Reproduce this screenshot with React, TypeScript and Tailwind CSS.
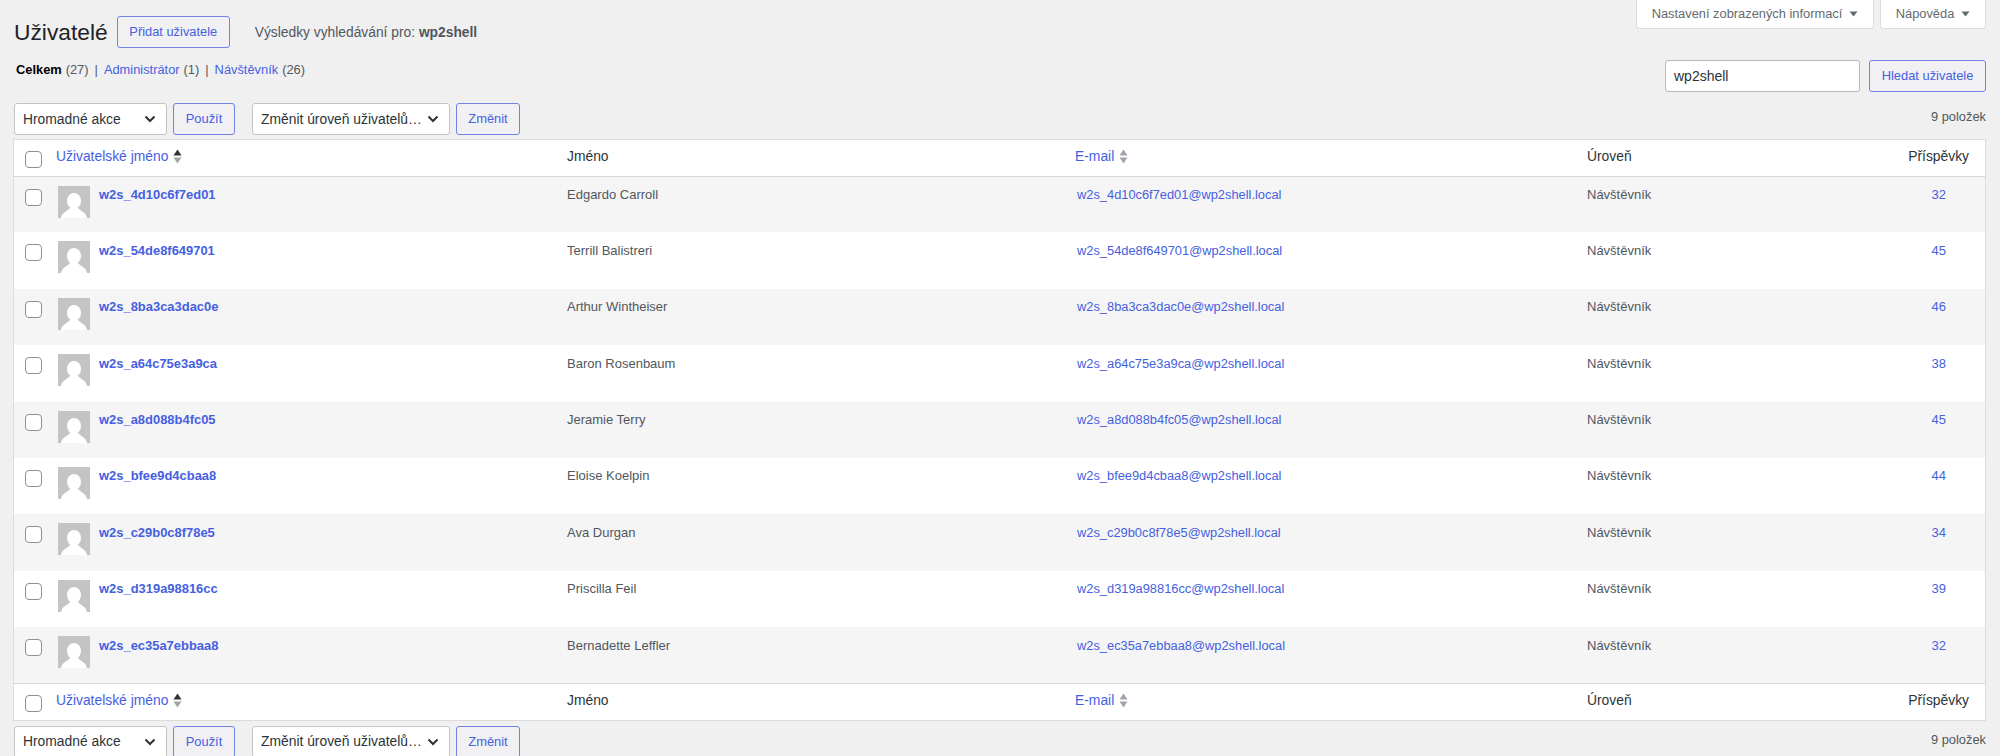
const rows = [
  ["w2s_4d10c6f7ed01", "Edgardo Carroll", "32"],
  ["w2s_54de8f649701", "Terrill Balistreri", "45"],
  ["w2s_8ba3ca3dac0e", "Arthur Wintheiser", "46"],
  ["w2s_a64c75e3a9ca", "Baron Rosenbaum", "38"],
  ["w2s_a8d088b4fc05", "Jeramie Terry", "45"],
  ["w2s_bfee9d4cbaa8", "Eloise Koelpin", "44"],
  ["w2s_c29b0c8f78e5", "Ava Durgan", "34"],
  ["w2s_d319a98816cc", "Priscilla Feil", "39"],
  ["w2s_ec35a7ebbaa8", "Bernadette Leffler", "32"],
];

function Sort({ active }: { active?: boolean }) {
  return (
    <svg width="9" height="15" viewBox="0 0 9 15" className="inline-block ml-[5px] align-[-3px]">
      <path d="M4.5 0.5 L8.5 6.5 L0.5 6.5 Z" fill={active ? "#2f3338" : "#a0a5aa"} />
      <path d="M0.5 8.5 L8.5 8.5 L4.5 14.5 Z" fill="#a0a5aa" />
    </svg>
  );
}

function Chevron() {
  return (
    <svg width="12" height="8" viewBox="0 0 12 8" className="shrink-0">
      <path d="M1.5 1.5 L6 6 L10.5 1.5" fill="none" stroke="#2c3338" strokeWidth="2" />
    </svg>
  );
}

function Select({ text, w }: { text: string; w: string }) {
  return (
    <div className={`${w} h-8 bg-white border border-[#c4c4c6] rounded-[3px] flex items-center justify-between pl-2 pr-[10px] text-[13.85px] text-[#2c3338] whitespace-nowrap`}>
      <span>{text}</span>
      <Chevron />
    </div>
  );
}

function Btn({ text, w }: { text: string; w: string }) {
  return (
    <div className={`${w} h-8 bg-[#f1f1f3] border border-[#7083e0] rounded-[3px] flex items-center justify-center text-[12.9px] text-[#4560e0] whitespace-nowrap`}>
      {text}
    </div>
  );
}

function Actions() {
  return (
    <div className="flex items-center">
      <Select text="Hromadné akce" w="w-[153px]" />
      <div className="w-[6px]" />
      <Btn text="Použít" w="w-[62px]" />
      <div className="w-[17px]" />
      <Select text="Změnit úroveň uživatelů…" w="w-[198px]" />
      <div className="w-[6px]" />
      <Btn text="Změnit" w="w-[64px]" />
    </div>
  );
}

function Checkbox() {
  return <div className="w-[17px] h-[17px] bg-white border border-[#8c8f94] rounded-[4px]" />;
}

function Avatar() {
  return (
    <svg width="32" height="32" viewBox="0 0 32 32" className="shrink-0">
      <rect width="32" height="32" fill="#c4c4c4" />
      <ellipse cx="16" cy="15" rx="7" ry="8" fill="#fff" />
      <path d="M3 32 C4 26 10 25 12 22 L20 22 C22 25 28 26 29 32 Z" fill="#fff" />
    </svg>
  );
}

function HeadRow() {
  return (
    <>
      <th className="p-0 pt-[4px] align-middle font-normal">
        <div className="pl-[11px]"><Checkbox /></div>
      </th>
      <th className="pl-[8px] pb-[3px] font-normal text-left align-middle text-[13.85px] text-[#4560e0]">
        Uživatelské jméno<Sort active />
      </th>
      <th className="pl-[10px] pb-[3px] font-normal text-left align-middle text-[13.85px] text-[#2c3338]">Jméno</th>
      <th className="pl-[8px] pb-[3px] font-normal text-left align-middle text-[13.85px] text-[#4560e0]">
        E-mail<Sort />
      </th>
      <th className="pl-[10px] pb-[3px] font-normal text-left align-middle text-[13.85px] text-[#2c3338]">Úroveň</th>
      <th className="pr-[16px] pb-[3px] font-normal text-right align-middle text-[13.85px] text-[#2c3338]">Příspěvky</th>
    </>
  );
}

export default function App() {
  return (
    <div className="relative w-[2000px] h-[756px] overflow-hidden bg-[#f0f0f1] text-[13px] text-[#50575e] font-['Liberation_Sans',Arial,sans-serif]">
      <div className="absolute right-[14px] top-0 flex gap-[6px]">
        <div className="w-[238px] h-[29px] bg-white border border-[#dcdcde] border-t-0 rounded-b-[4px] flex items-center justify-center gap-[7px] text-[12.85px] text-[#646970]">
          Nastavení zobrazených informací
          <svg width="9" height="6" viewBox="0 0 9 6"><path d="M0.5 0.5 L8.5 0.5 L4.5 5.5 Z" fill="#646970" /></svg>
        </div>
        <div className="w-[106px] h-[29px] bg-white border border-[#dcdcde] border-t-0 rounded-b-[4px] flex items-center justify-center gap-[7px] text-[12.85px] text-[#646970]">
          Nápověda
          <svg width="9" height="6" viewBox="0 0 9 6"><path d="M0.5 0.5 L8.5 0.5 L4.5 5.5 Z" fill="#646970" /></svg>
        </div>
      </div>

      <div className="px-[14px] pt-[16px]">
        <div className="flex items-center h-[32px]">
          <h1 className="text-[22.8px] leading-[32px] text-[#1d2327] font-normal">Uživatelé</h1>
          <div className="ml-[9px] w-[113px] h-8 bg-[#f1f1f3] border border-[#7083e0] rounded-[3px] flex items-center justify-center text-[12.85px] text-[#4560e0]">Přidat uživatele</div>
          <div className="ml-[25px] mt-[3px] text-[13.8px] text-[#50575e]">Výsledky vyhledávání pro: <b className="font-bold">wp2shell</b></div>
        </div>

        <div className="flex items-start justify-between">
          <div className="mt-[14px] pl-[2px] text-[12.85px] leading-[16px] text-[#50575e] flex">
            <b className="text-black font-bold">Celkem</b>
            <span className="ml-[4px]">(27)</span>
            <span className="mx-[6px]">|</span>
            <span className="text-[#4560e0]">Administrátor</span>
            <span className="ml-[4px]">(1)</span>
            <span className="mx-[6px]">|</span>
            <span className="text-[#4560e0]">Návštěvník</span>
            <span className="ml-[4px]">(26)</span>
          </div>
          <div className="mt-[12px] flex">
            <div className="w-[195px] h-8 bg-white border border-[#b8b8ba] rounded-[3px] flex items-center px-2 text-[14px] text-[#2c3338]">wp2shell</div>
            <div className="w-[9px]" />
            <Btn text="Hledat uživatele" w="w-[117px]" />
          </div>
        </div>

        <div className="flex items-center justify-between mt-[11px] h-[32px]">
          <Actions />
          <div className="text-[12.85px] text-[#50575e] -mt-[4px]">9 položek</div>
        </div>

        <table className="mt-[5px] w-[1971px] table-fixed border-collapse bg-white shadow-[0_0_0_1px_#dcdcde]">
          <colgroup>
            <col className="w-[34px]" />
            <col className="w-[509px]" />
            <col className="w-[510px]" />
            <col className="w-[510px]" />
            <col className="w-[310px]" />
            <col />
          </colgroup>
          <thead>
            <tr className="h-[36px] border-b border-[#d5d5d7]"><HeadRow /></tr>
          </thead>
          <tbody>
            {rows.map((r, i) => (
              <tr key={r[0]} className={`h-[56.4px] ${i % 2 === 0 ? "bg-[#f5f5f6]" : "bg-white"}`}>
                <td className="p-0 align-top pt-[12px] pl-[11px]"><Checkbox /></td>
                <td className="p-0 align-top pt-[9px] pl-[10px]">
                  <div className="flex items-start gap-[9px]">
                    <Avatar />
                    <span className="text-[#4560e0] font-bold text-[12.95px] leading-[18px] mt-[0.5px]">{r[0]}</span>
                  </div>
                </td>
                <td className="p-0 align-top pt-[9.5px] pl-[10px] leading-[18px]">{r[1]}</td>
                <td className="p-0 align-top pt-[9.5px] pl-[10px] text-[12.85px] leading-[18px] text-[#4560e0]">{r[0]}@wp2shell.local</td>
                <td className="p-0 align-top pt-[9.5px] pl-[10px] leading-[18px]">Návštěvník</td>
                <td className="p-0 align-top pt-[9.5px] pr-[39px] text-right leading-[18px] text-[#4560e0]">{r[2]}</td>
              </tr>
            ))}
          </tbody>
          <tfoot>
            <tr className="h-[36px] border-t border-[#d5d5d7]"><HeadRow /></tr>
          </tfoot>
        </table>

        <div className="flex items-center justify-between mt-[6px] h-[32px]">
          <Actions />
          <div className="text-[12.85px] text-[#50575e] -mt-[4px]">9 položek</div>
        </div>
      </div>
    </div>
  );
}
